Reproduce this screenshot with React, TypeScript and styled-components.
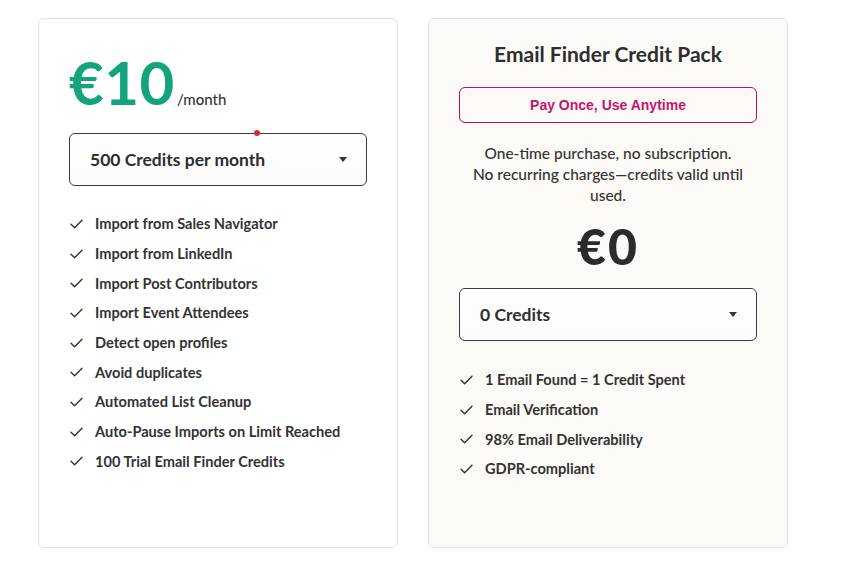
import React from "react";
import styled, { createGlobalStyle } from "styled-components";

const Global = createGlobalStyle`
  html, body { margin: 0; padding: 0; background: #ffffff; }
  body { font-family: "Lato", "Noto Sans", sans-serif; color: #2f2f2f; }
  * { box-sizing: border-box; }
`;

const Page = styled.div`
  display: flex;
  gap: 30px;
  padding: 18px 0 0 38px;
`;

const Card = styled.div<{ $tint?: boolean }>`
  width: 360px;
  height: 530px;
  border: 1px solid #e2e2e2;
  border-radius: 6px;
  background: ${(p) => (p.$tint ? "#fcfaf6" : "#ffffff")};
  padding: ${(p) => (p.$tint ? "22px 30px 0" : "30px 30px 0")};
  display: flex;
  flex-direction: column;
  align-items: ${(p) => (p.$tint ? "center" : "stretch")};
`;

const PriceRow = styled.div`
  display: flex;
  align-items: baseline;
  gap: 2px;
  height: 74px;
`;

const BigPrice = styled.span`
  font-family: "Lato", sans-serif;
  font-size: 60px;
  font-weight: 700;
  color: #13a37d;
  letter-spacing: 0.5px;
  line-height: 66px;
`;

const Per = styled.span`
  font-size: 15px;
  color: #333;
  font-weight: 500;
`;

const SelectBox = styled.div<{ $top: number; $center?: boolean }>`
  position: relative;
  margin-top: ${(p) => p.$top}px;
  width: 298px;
  height: 53px;
  border: 1px solid #3a3a3a;
  border-radius: 6px;
  background: linear-gradient(#ffffff, #fbfbfb);
  display: flex;
  align-items: center;
  justify-content: space-between;
  padding: 0 19px 0 20px;
  font-size: 17.5px;
  font-weight: 700;
  color: #2e2e2e;
  align-self: ${(p) => (p.$center ? "center" : "flex-start")};
`;

const Dot = styled.span`
  position: absolute;
  top: -4px;
  left: 184px;
  width: 6px;
  height: 6px;
  border-radius: 50%;
  background: #e0262c;
`;

const Caret = styled.span`
  width: 0;
  height: 0;
  border-left: 4px solid transparent;
  border-right: 4px solid transparent;
  border-top: 5px solid #333;
`;

const List = styled.ul<{ $top: number }>`
  list-style: none;
  margin: ${(p) => p.$top}px 0 0;
  padding: 0 0 0 1px;
  align-self: stretch;
  display: flex;
  flex-direction: column;
`;

const Item = styled.li`
  display: flex;
  align-items: center;
  gap: 12px;
  height: 29.7px;
  font-size: 14.6px;
  font-weight: 700;
  color: #333;
`;

const Title = styled.h2`
  margin: 0;
  font-size: 21px;
  font-weight: 700;
  color: #2e2e2e;
  line-height: 26px;
`;

const Badge = styled.div`
  margin-top: 20px;
  width: 298px;
  height: 36px;
  border: 1px solid #b8135f;
  border-radius: 6px;
  display: flex;
  align-items: center;
  justify-content: center;
  font-family: "Liberation Sans", Arial, sans-serif;
  font-size: 14px;
  font-weight: 700;
  color: #c4146a;
`;

const Desc = styled.p`
  margin: 20px 0 0;
  text-align: center;
  font-size: 15.5px;
  line-height: 21px;
  font-weight: 500;
  color: #333;
  width: 298px;
`;

const ZeroPrice = styled.div`
  margin-top: 10px;
  font-size: 50px;
  font-weight: 900;
  line-height: 60px;
  letter-spacing: 2px;
  color: #2b2b2b;
`;

const Check = () => (
  <svg width="13" height="10" viewBox="0 0 13 10" fill="none">
    <path d="M1 5.2 L4.6 8.8 L12 1.2" stroke="#333" strokeWidth="1.4" strokeLinecap="round" strokeLinejoin="round" />
  </svg>
);

const left = [
  "Import from Sales Navigator",
  "Import from LinkedIn",
  "Import Post Contributors",
  "Import Event Attendees",
  "Detect open profiles",
  "Avoid duplicates",
  "Automated List Cleanup",
  "Auto-Pause Imports on Limit Reached",
  "100 Trial Email Finder Credits",
];

const right = [
  "1 Email Found = 1 Credit Spent",
  "Email Verification",
  "98% Email Deliverability",
  "GDPR-compliant",
];

export default function App() {
  return (
    <>
      <Global />
      <Page>
        <Card>
          <PriceRow>
            <BigPrice>€10</BigPrice>
            <Per>/month</Per>
          </PriceRow>
          <SelectBox $top={10}>
            <Dot />
            <span>500 Credits per month</span>
            <Caret />
          </SelectBox>
          <List $top={23}>
            {left.map((t) => (
              <Item key={t}>
                <Check />
                {t}
              </Item>
            ))}
          </List>
        </Card>
        <Card $tint>
          <Title>Email Finder Credit Pack</Title>
          <Badge>Pay Once, Use Anytime</Badge>
          <Desc>
            One-time purchase, no subscription.
            <br />
            No recurring charges—credits valid until
            <br />
            used.
          </Desc>
          <ZeroPrice>€0</ZeroPrice>
          <SelectBox $top={12} $center>
            <span>0 Credits</span>
            <Caret />
          </SelectBox>
          <List $top={24}>
            {right.map((t) => (
              <Item key={t}>
                <Check />
                {t}
              </Item>
            ))}
          </List>
        </Card>
      </Page>
    </>
  );
}
